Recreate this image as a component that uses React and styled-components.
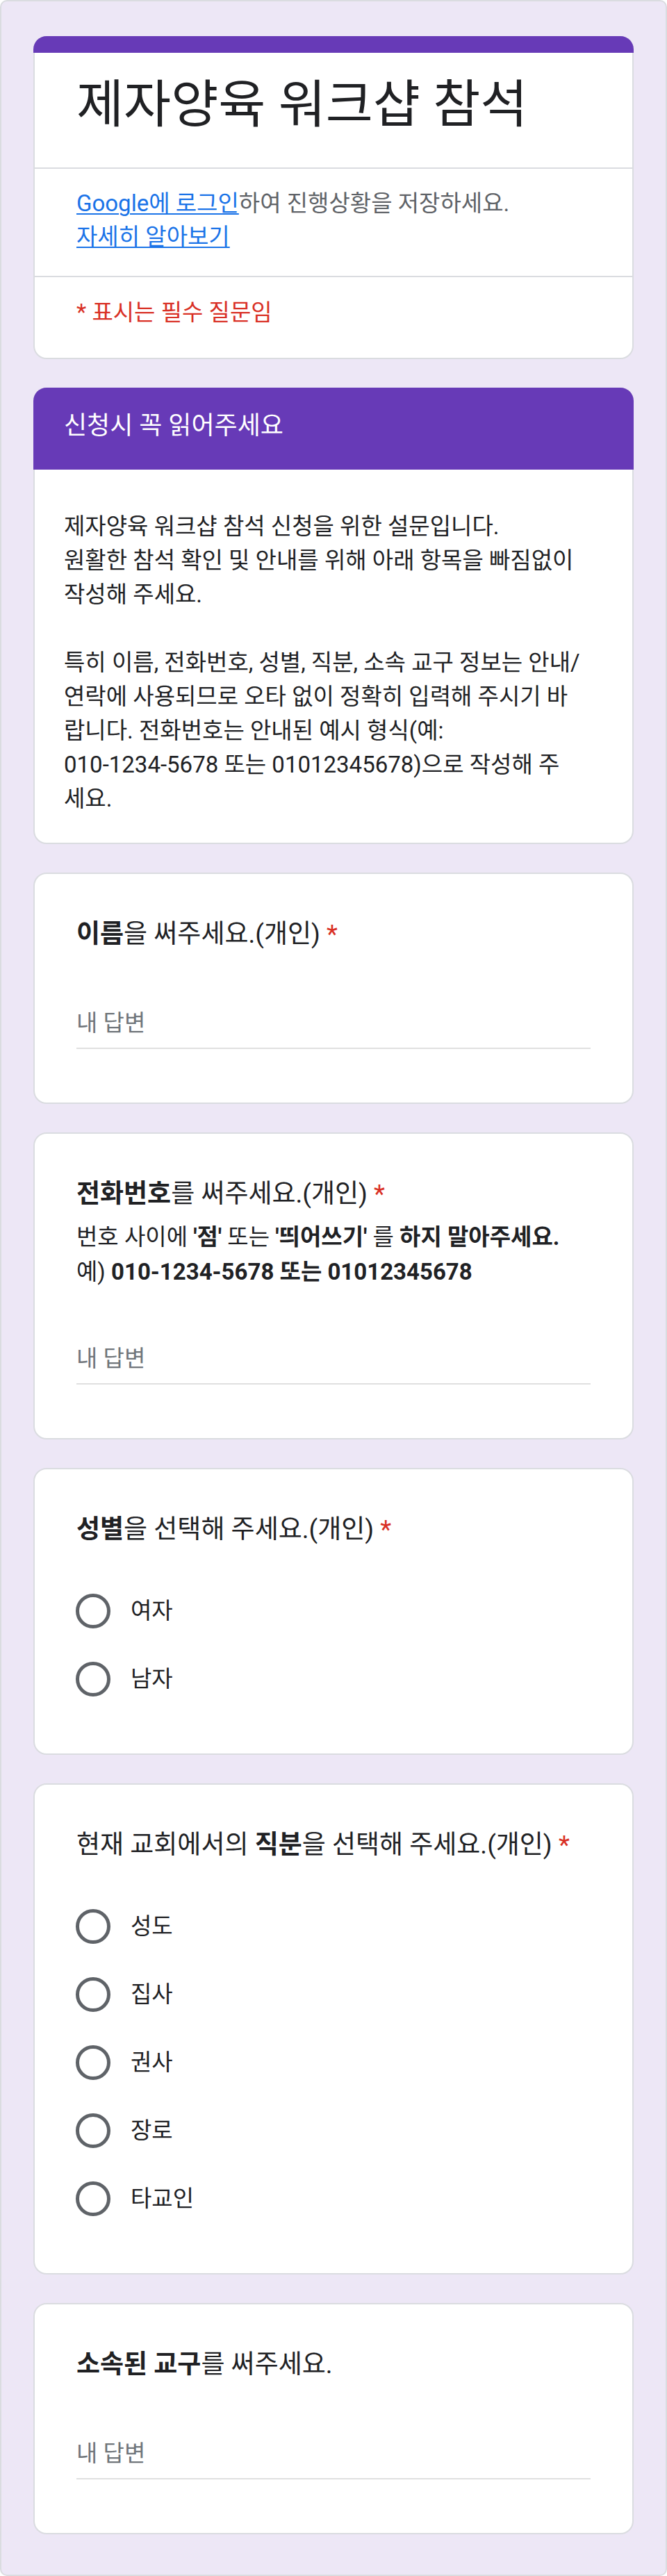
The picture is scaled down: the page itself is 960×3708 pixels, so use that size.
import React from 'react';
import styled, { createGlobalStyle } from 'styled-components';

const GlobalStyle = createGlobalStyle`
  * { box-sizing: border-box; }
  html, body { margin: 0; padding: 0; background: #fff; }
  body {
    font-family: Roboto, "Noto Sans CJK KR", sans-serif;
    color: #202124;
  }
  p { margin: 0; }
`;

const Frame = styled.main`
  width: 960px;
  min-height: 3708px;
  background: #ede7f6;
  border: 2px solid #dadce0;
  border-radius: 10px;
  padding: 50px 46px 53px;
  display: flex;
  flex-direction: column;
  gap: 41px;
`;

const Card = styled.section`
  background: #fff;
  border: 2px solid #dadce0;
  border-radius: 19px;
`;

const TopBand = styled.div`
  height: 24px;
  margin: -2px -2px 0;
  background: #673ab7;
  border-radius: 19px 19px 0 0;
`;

const TitleBlock = styled.div`
  padding: 27px 60px 42px;
  border-bottom: 2px solid #dadce0;
`;

const FormTitle = styled.h1`
  margin: 0;
  font-size: 74px;
  line-height: 96px;
  font-weight: 400;
  color: #202124;
`;

const LoginBlock = styled.div`
  padding: 26px 60px 32px;
  border-bottom: 2px solid #dadce0;
  font-size: 33px;
  line-height: 48px;
  color: #5f6368;
`;

const LoginLink = styled.a`
  color: #1a73e8;
  text-decoration: underline;
  text-underline-offset: 3px;
  text-decoration-thickness: 2px;
`;

const RequiredNote = styled.p`
  padding: 27px 60px 41px;
  font-size: 33px;
  line-height: 48px;
  color: #d93025;
`;

const SectionHeader = styled.h2`
  margin: -2px -2px 0;
  padding: 31px 44px 39px;
  background: #673ab7;
  border-radius: 19px 19px 0 0;
  color: #fff;
  font-size: 36px;
  line-height: 48px;
  font-weight: 400;
`;

const SectionBody = styled.div`
  padding: 57px 42px 39px;
  font-size: 33px;
  line-height: 49px;
  white-space: nowrap;

  p + p {
    margin-top: 49px;
  }
`;

const QuestionCard = styled(Card)`
  padding: 59px 60px ${({ $choices }) => ($choices ? '58px' : '77px')};
`;

const QuestionTitle = styled.h3`
  margin: 0;
  font-size: 37px;
  line-height: 56px;
  font-weight: 400;
  color: #202124;

  b {
    font-weight: 700;
  }
`;

const Star = styled.span`
  color: #d93025;
`;

const QuestionHelp = styled.p`
  margin-top: 9px;
  font-size: 33px;
  line-height: 50px;

  b {
    font-weight: 700;
  }
`;

const AnswerLine = styled.div`
  margin-top: 76px;
  padding-bottom: 11px;
  border-bottom: 2px solid #e0e0e0;
  font-size: 33px;
  line-height: 48px;
  color: #70757a;
`;

const Choices = styled.div`
  margin-top: 40px;
  display: flex;
  flex-direction: column;
`;

const Choice = styled.label`
  height: 98px;
  display: flex;
  align-items: center;
  gap: 29px;
`;

const RadioRing = styled.span`
  width: 50px;
  height: 50px;
  margin-left: -1px;
  flex-shrink: 0;
  border: 5px solid #5f6368;
  border-radius: 50%;
`;

const ChoiceLabel = styled.span`
  font-size: 33px;
  line-height: 48px;
  color: #202124;
`;

const questions = [
  {
    id: 'name',
    title: <><b>이름</b>을 써주세요.(개인)</>,
    required: true,
  },
  {
    id: 'phone',
    title: <><b>전화번호</b>를 써주세요.(개인)</>,
    help: (
      <>
        번호 사이에 <b>'점'</b> 또는 <b>'띄어쓰기'</b> 를 <b>하지 말아주세요.</b>
        <br />
        예) <b>010-1234-5678 또는 01012345678</b>
      </>
    ),
    required: true,
  },
  {
    id: 'gender',
    title: <><b>성별</b>을 선택해 주세요.(개인)</>,
    options: ['여자', '남자'],
    required: true,
  },
  {
    id: 'role',
    title: <>현재 교회에서의 <b>직분</b>을 선택해 주세요.(개인)</>,
    options: ['성도', '집사', '권사', '장로', '타교인'],
    required: true,
  },
  {
    id: 'district',
    title: <><b>소속된 교구</b>를 써주세요.</>,
    required: false,
  },
];

const Question = ({ q }) => (
  <QuestionCard $choices={!!q.options}>
    <QuestionTitle>
      {q.title}
      {q.required && <Star> *</Star>}
    </QuestionTitle>
    {q.help && <QuestionHelp>{q.help}</QuestionHelp>}
    {q.options ? (
      <Choices>
        {q.options.map(opt => (
          <Choice key={opt}>
            <RadioRing />
            <ChoiceLabel>{opt}</ChoiceLabel>
          </Choice>
        ))}
      </Choices>
    ) : (
      <AnswerLine>내 답변</AnswerLine>
    )}
  </QuestionCard>
);

export default function App() {
  return (
    <>
      <GlobalStyle />
      <Frame>
        <Card>
          <TopBand />
          <TitleBlock>
            <FormTitle>제자양육 워크샵 참석</FormTitle>
          </TitleBlock>
          <LoginBlock>
            <LoginLink href="#">Google에 로그인</LoginLink>하여 진행상황을 저장하세요.
            <br />
            <LoginLink href="#">자세히 알아보기</LoginLink>
          </LoginBlock>
          <RequiredNote>* 표시는 필수 질문임</RequiredNote>
        </Card>

        <Card>
          <SectionHeader>신청시 꼭 읽어주세요</SectionHeader>
          <SectionBody>
            <p>
              제자양육 워크샵 참석 신청을 위한 설문입니다.
              <br />
              원활한 참석 확인 및 안내를 위해 아래 항목을 빠짐없이
              <br />
              작성해 주세요.
            </p>
            <p>
              특히 이름, 전화번호, 성별, 직분, 소속 교구 정보는 안내/
              <br />
              연락에 사용되므로 오타 없이 정확히 입력해 주시기 바
              <br />
              랍니다. 전화번호는 안내된 예시 형식(예:
              <br />
              010-1234-5678 또는 01012345678)으로 작성해 주
              <br />
              세요.
            </p>
          </SectionBody>
        </Card>

        {questions.map(q => (
          <Question key={q.id} q={q} />
        ))}
      </Frame>
    </>
  );
}
